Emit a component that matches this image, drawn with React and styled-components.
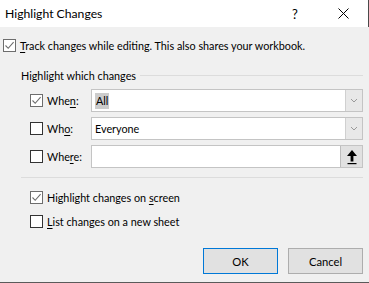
import React from "react";
import styled, { createGlobalStyle } from "styled-components";

const Global = createGlobalStyle`
  html, body { margin: 0; padding: 0; background: #f0f0f0; }
  body { font-family: Lato, "Noto Sans", sans-serif; font-size: 10.8px; color: #000; }
`;

const Window = styled.div`
  width: 369px;
  height: 283px;
  background: #f0f0f0;
  display: flex;
  flex-direction: column;
  box-sizing: border-box;
  border-bottom: 1px solid #5a5a5a;
  overflow: hidden;
`;

const TitleBar = styled.div`
  height: 27px;
  background: #fff;
  display: flex;
  align-items: center;
  padding-left: 5px;
  box-sizing: border-box;
  border-right: 1px solid #4a4a4a;
  flex-shrink: 0;
`;

const Title = styled.div`
  flex: 1;
  font-size: 12.2px;
  color: #000;
`;

const HelpGlyph = styled.div`
  width: 12px;
  margin-right: 37px;
  font-size: 13px;
  text-align: center;
`;

const CloseBox = styled.div`
  width: 11px;
  height: 11px;
  margin-right: 19px;
  display: flex;
`;

const Body = styled.div`
  display: flex;
  flex-direction: column;
  padding: 11px 6px 0 3px;
`;

const CheckRow = styled.div`
  display: flex;
  align-items: center;
  height: 14px;
  gap: 4px;
`;

const Box = styled.div`
  width: 13px;
  height: 13px;
  box-sizing: border-box;
  border: 1px solid ${(p) => (p.$checked ? "#6d6d6d" : "#333")};
  background: #fff;
  display: flex;
  align-items: center;
  justify-content: center;
  flex-shrink: 0;
`;

const Label = styled.span`
  white-space: nowrap;
  width: ${(p) => (p.$w ? p.$w + "px" : "auto")};
  flex-shrink: 0;
`;

const U = styled.span`
  text-decoration: underline;
  text-underline-offset: 2px;
`;

const Group = styled.div`
  margin-left: 18px;
  margin-top: 16px;
  display: flex;
  flex-direction: column;
`;

const GroupHeader = styled.div`
  display: flex;
  align-items: center;
  gap: 4px;
  height: 14px;
`;

const Line = styled.div`
  flex: 1;
  height: 1px;
  background: #dcdcdc;
`;

const Fields = styled.div`
  display: flex;
  flex-direction: column;
  gap: 5px;
  margin-top: 7px;
`;

const FieldRow = styled.div`
  display: flex;
  align-items: center;
  height: 23px;
  padding-left: 9px;
  gap: 4px;
`;

const Input = styled.div`
  flex: 1;
  height: 23px;
  box-sizing: border-box;
  border: 1px solid #c4c4c4;
  background: #fff;
  display: flex;
  align-items: center;
  padding-left: 2px;
`;

const Value = styled.span`
  flex: 1;
  padding-left: 1px;
`;

const Selected = styled.span`
  background: #cccccc;
  padding: 1px 1px 2px 1px;
`;

const DropButton = styled.div`
  width: 17px;
  height: 21px;
  box-sizing: border-box;
  border-left: 1px solid #d0d0d0;
  background: #e8e8e8;
  display: flex;
  align-items: center;
  justify-content: center;
`;

const RefButton = styled.div`
  width: 22px;
  height: 21px;
  box-sizing: border-box;
  border-left: 1px solid #bdbdbd;
  background: #e1e1e1;
  display: flex;
  align-items: center;
  justify-content: center;
`;

const Separator = styled.div`
  height: 1px;
  background: #dcdcdc;
  margin-top: 9px;
`;

const Options = styled.div`
  display: flex;
  flex-direction: column;
  gap: 10px;
  margin-top: 12px;
  padding-left: 9px;
`;

const Buttons = styled.div`
  display: flex;
  justify-content: flex-end;
  gap: 10px;
  margin-top: 20px;
`;

const Button = styled.div`
  width: 75px;
  height: 26px;
  box-sizing: border-box;
  background: #e1e1e1;
  border: 1px solid ${(p) => (p.$primary ? "#0078d7" : "#adadad")};
  display: flex;
  align-items: center;
  justify-content: center;
  font-size: 11.2px;
`;

const Check = () => (
  <svg width="11" height="11" viewBox="0 0 11 11">
    <path d="M1.5 5.5 L4.2 8.3 L9.6 2.2" fill="none" stroke="#6d6d6d" strokeWidth="1.1" />
  </svg>
);

const CheckBox = ({ checked }) => <Box $checked={checked}>{checked && <Check />}</Box>;

const Chevron = () => (
  <svg width="8" height="5" viewBox="0 0 8 5">
    <path d="M1 1 L4 4 L7 1" fill="none" stroke="#9a9a9a" strokeWidth="1" />
  </svg>
);

const UpArrow = () => (
  <svg width="12" height="16" viewBox="0 0 12 16">
    <path d="M6 1 L11 7 L7.4 7 L7.4 12.5 L4.6 12.5 L4.6 7 L1 7 Z" fill="#000" />
    <rect x="1.5" y="14" width="9" height="1.2" fill="#000" />
  </svg>
);

export default function App() {
  return (
    <>
      <Global />
      <Window>
        <TitleBar>
          <Title>Highlight Changes</Title>
          <HelpGlyph>?</HelpGlyph>
          <CloseBox>
            <svg width="11" height="11" viewBox="0 0 11 11">
              <path d="M0.5 0.5 L10.5 10.5 M10.5 0.5 L0.5 10.5" stroke="#000" strokeWidth="1" fill="none" />
            </svg>
          </CloseBox>
        </TitleBar>
        <Body>
          <CheckRow>
            <CheckBox checked />
            <Label>
              <U>T</U>rack changes while editing. This also shares your workbook.
            </Label>
          </CheckRow>
          <Group>
            <GroupHeader>
              <Label>Highlight which changes</Label>
              <Line />
            </GroupHeader>
            <Fields>
              <FieldRow>
                <CheckBox checked />
                <Label $w={40}>
                  Whe<U>n</U>:
                </Label>
                <Input>
                  <Value>
                    <Selected>All</Selected>
                  </Value>
                  <DropButton>
                    <Chevron />
                  </DropButton>
                </Input>
              </FieldRow>
              <FieldRow>
                <CheckBox />
                <Label $w={40}>
                  Wh<U>o</U>:
                </Label>
                <Input>
                  <Value>Everyone</Value>
                  <DropButton>
                    <Chevron />
                  </DropButton>
                </Input>
              </FieldRow>
              <FieldRow>
                <CheckBox />
                <Label $w={40}>
                  Whe<U>r</U>e:
                </Label>
                <Input>
                  <Value />
                  <RefButton>
                    <UpArrow />
                  </RefButton>
                </Input>
              </FieldRow>
            </Fields>
            <Separator />
            <Options>
              <CheckRow>
                <CheckBox checked />
                <Label>
                  Highlight changes on <U>s</U>creen
                </Label>
              </CheckRow>
              <CheckRow>
                <CheckBox />
                <Label>
                  <U>L</U>ist changes on a new sheet
                </Label>
              </CheckRow>
            </Options>
          </Group>
          <Buttons>
            <Button $primary>OK</Button>
            <Button>Cancel</Button>
          </Buttons>
        </Body>
      </Window>
    </>
  );
}
